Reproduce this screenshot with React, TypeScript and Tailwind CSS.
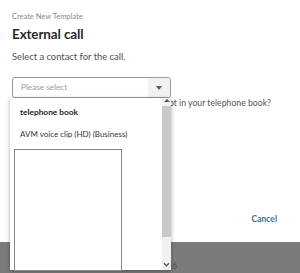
const FONT = { fontFamily: 'Lato, "Noto Sans", sans-serif' };

export default function App() {
  return (
    <div className="relative h-[273px] w-[300px] overflow-hidden bg-[#7b7b7b]" style={FONT}>
      <div className="h-[242px] bg-white px-3 pt-[12px]">
        <div className="text-[7.5px] leading-[10px] text-[#8a8a8a]">Create New Template</div>
        <div className="mt-[3px] text-[13.5px] font-bold leading-[18px] tracking-[-0.01em] text-[#2b2b2b]">
          External call
        </div>
        <div className="mt-[7px] text-[9.4px] leading-[14px] text-[#4f4f4f]">
          Select a contact for the call.
        </div>
        <div className="mt-[13px] flex h-[21px] w-[159px] items-stretch overflow-hidden rounded-[3px] border border-[#9a9a9a]">
          <div className="flex flex-1 items-center pl-[8px] text-[8.2px] text-[#999]">Please select</div>
          <div className="flex w-[22px] items-center justify-center bg-[#f1f1f1]">
            <span className="h-0 w-0 border-x-[3px] border-t-[4px] border-x-transparent border-t-[#555]" />
          </div>
        </div>
        <div className="flex justify-end whitespace-nowrap pr-[17px] text-[8.7px] leading-[10px] text-[#555]">
          Number not in your telephone book?
        </div>
        <div className="mt-[105px] flex justify-end pr-[11px]">
          <span className="text-[8.5px] font-bold leading-[12px] text-[#3a6f96]">Cancel</span>
        </div>
      </div>
      <div className="absolute left-[172px] top-[260px] text-[8.5px] text-[#555]">6</div>

      {/* open dropdown */}
      <div className="absolute left-[10px] top-[98px] flex h-[172px] w-[161px] bg-white shadow-[0_1px_4px_rgba(0,0,0,0.35)]">
        <div className="flex-1">
          <div className="pl-[10px] pt-[8px] text-[8.3px] font-bold leading-[13px] text-[#222]">telephone book</div>
          <div className="mt-[9px] pl-[10px] text-[8px] leading-[13px] text-[#333]">
            AVM voice clip (HD) (Business)
          </div>
          <div className="ml-[4px] mt-[8px] h-[122px] w-[108px] border border-[#888]" />
        </div>
        <div className="flex w-[9px] flex-col items-center bg-[#f1f1f1]">
          <span className="mt-[1px] h-0 w-0 border-x-[3px] border-b-[3px] border-x-transparent border-b-[#555]" />
          <div className="mt-[4px] h-[131px] w-full bg-[#c9c9c9]" />
          <div className="flex-1" />
          <svg viewBox="0 0 8 6" className="mb-[3px] h-[5px] w-[7px]">
            <path d="M1 1.5 L4 4.5 L7 1.5" fill="none" stroke="#555" strokeWidth="1.6" />
          </svg>
        </div>
      </div>
    </div>
  );
}
